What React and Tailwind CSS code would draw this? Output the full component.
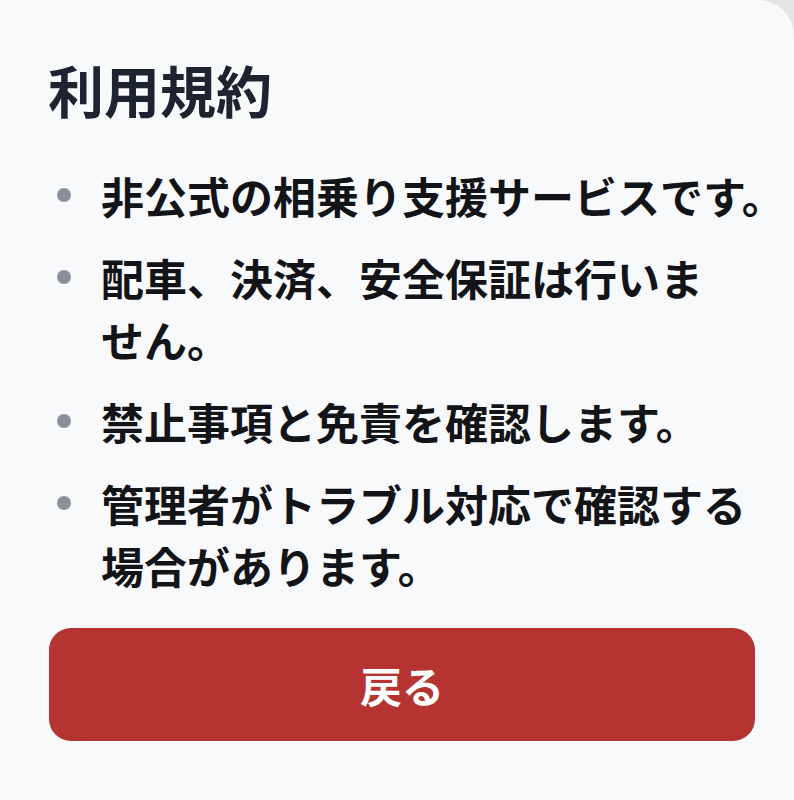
export default function App() {
    const items = [
        ['非公式の相乗り支援サービスです。'],
        ['配車、決済、安全保証は行いま', 'せん。'],
        ['禁止事項と免責を確認します。'],
        ['管理者がトラブル対応で確認する', '場合があります。'],
    ];

    return (
        <div className="min-h-screen bg-[#e4e4e7] font-['Noto_Sans_CJK_JP','Noto_Sans',sans-serif]">
            <div className="min-h-[800px] bg-[#f8f9fb] rounded-tr-[36px] pt-[56px] pl-[48px] pr-[40px] pb-10">
                {/* Title */}
                <h1 className="text-[56px] leading-[66px] font-bold text-[#1e2330]">利用規約</h1>

                {/* Terms list */}
                <ul className="mt-[42px] space-y-5">
                    {items.map((lines, i) => (
                        <li key={i} className="flex items-start">
                            <span className="h-[62px] flex items-center ml-[9px] mr-[30px] shrink-0">
                                <span className="block w-[14px] h-[14px] rounded-full bg-[#8b8f97]" />
                            </span>
                            <p className="text-[43px] leading-[62px] font-bold text-[#121418] whitespace-nowrap">
                                {lines.map((line, j) => (
                                    <span key={j} className="block">{line}</span>
                                ))}
                            </p>
                        </li>
                    ))}
                </ul>

                {/* Back button */}
                <button className="mt-[32px] w-full ml-px h-[113px] rounded-[22px] bg-[#b53330] text-white text-[42px] font-bold flex items-center justify-center">
                    戻る
                </button>
            </div>
        </div>
    );
}
